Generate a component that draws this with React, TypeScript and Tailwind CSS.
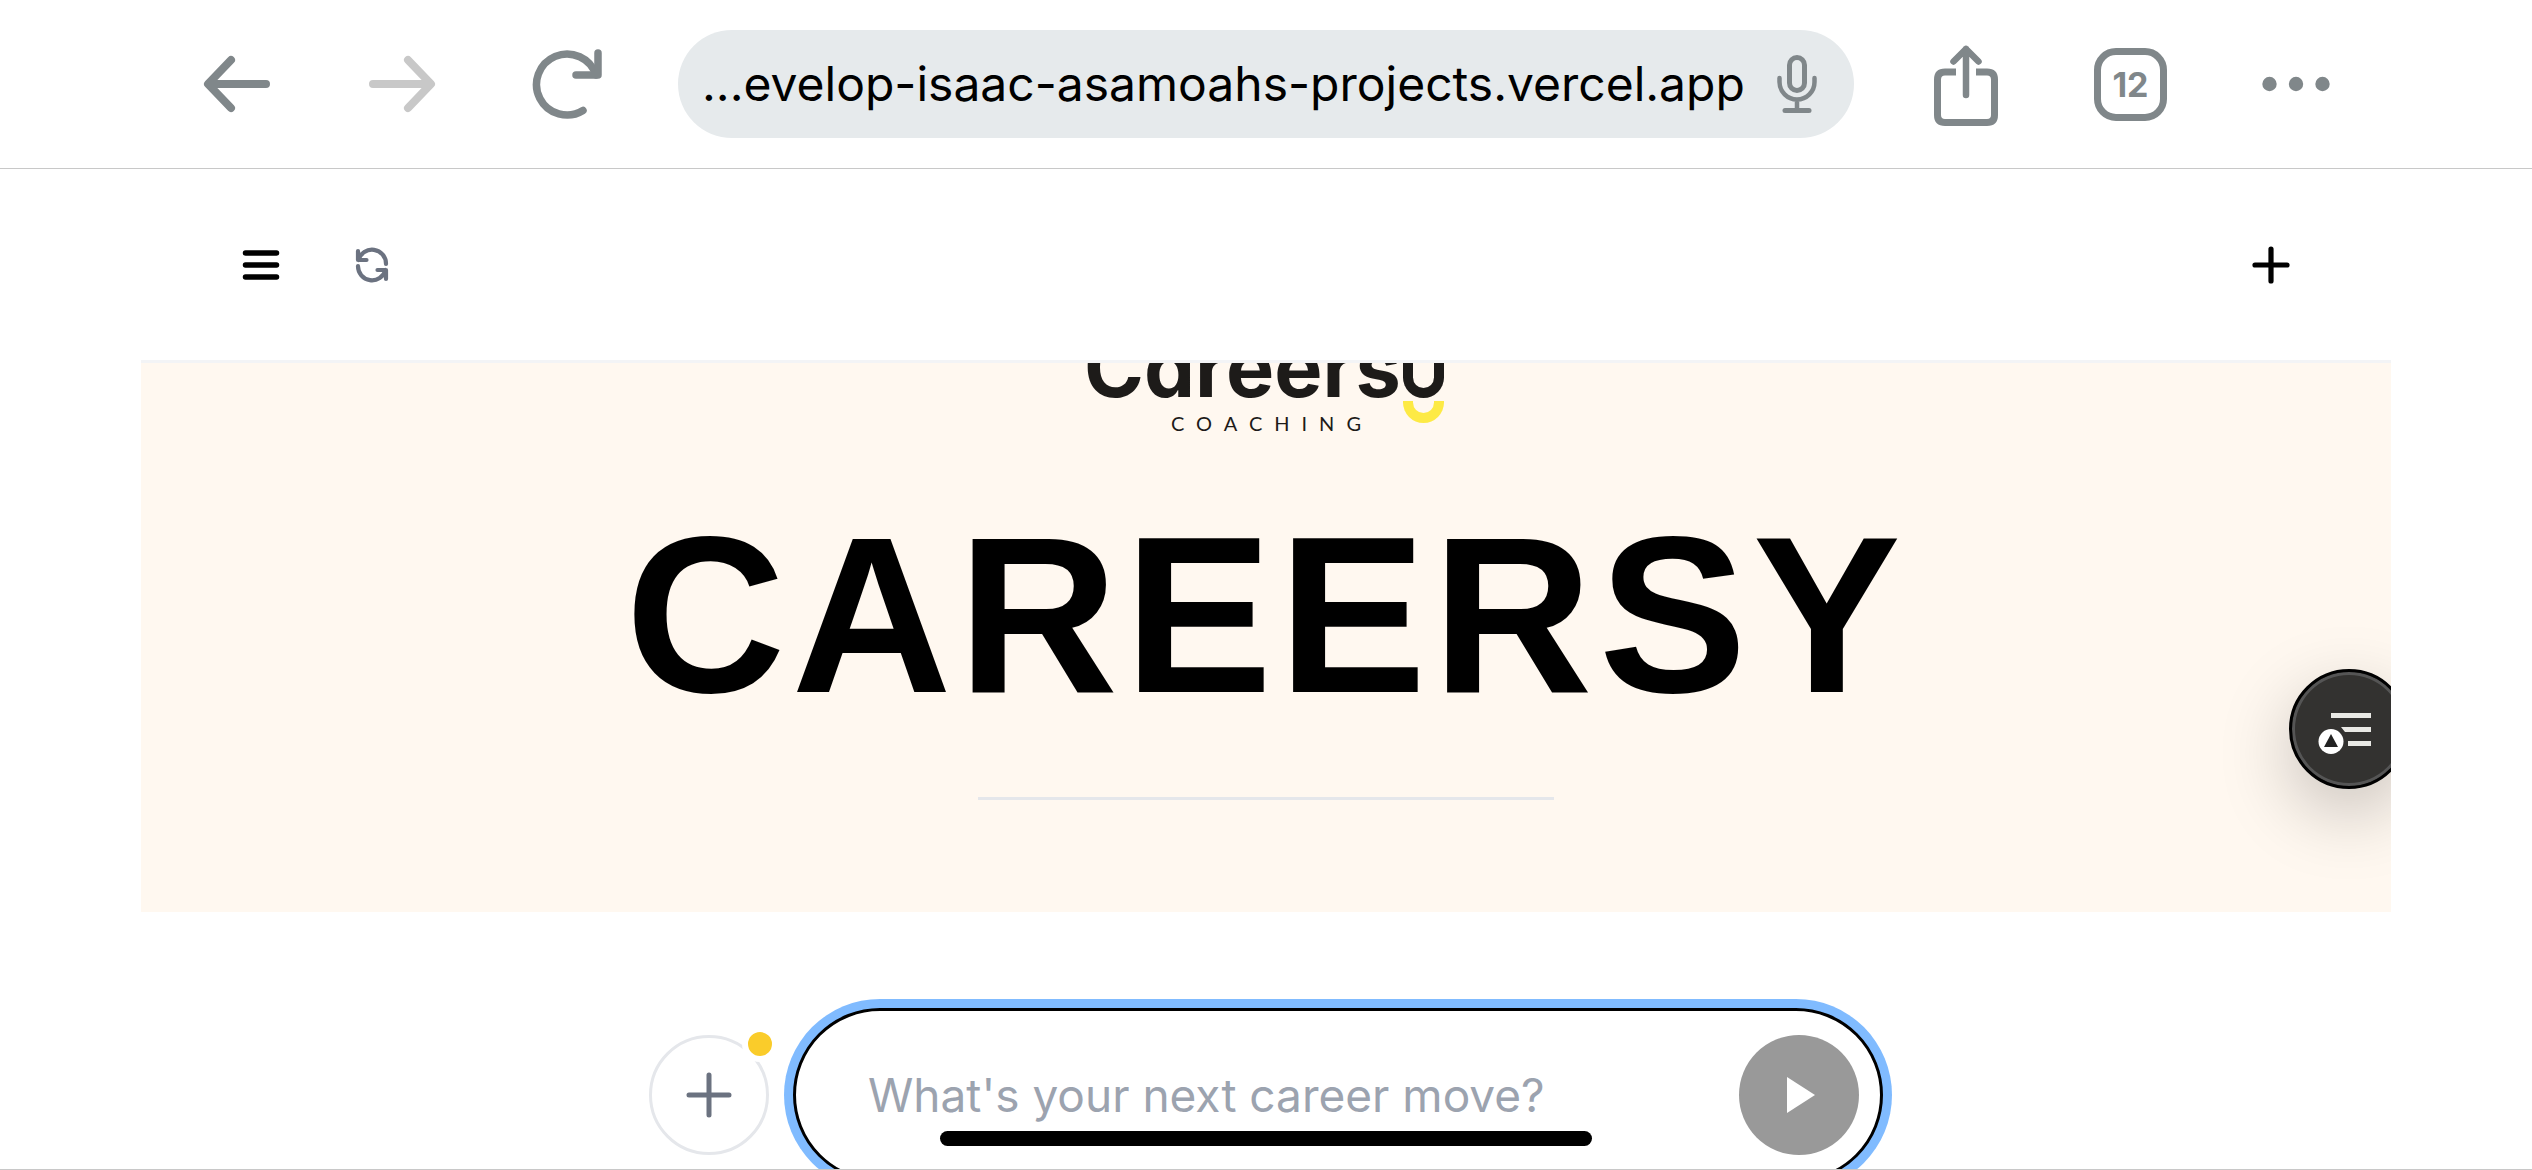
import React from "react";

const GRAY = "#80878a";

function BackIcon({ className = "" }: { className?: string }) {
  return (
    <svg width="70" height="60" viewBox="0 0 70 60" fill="none" stroke="currentColor" strokeWidth="8" strokeLinecap="round" strokeLinejoin="round" className={className}>
      <path d="M64 30H7M29 6 6 30l23 24" />
    </svg>
  );
}

function ReloadIcon() {
  return (
    <svg width="72" height="72" viewBox="0 0 72 72" fill="none" stroke="currentColor" strokeWidth="7.5" strokeLinecap="round" strokeLinejoin="round">
      <path d="M52 62.500A30.500 30.500 0 1 1 65 27" />
      <path d="M67 5V27H45" />
    </svg>
  );
}

function ShareIcon() {
  return (
    <svg width="66" height="84" viewBox="0 0 66 84" fill="none" stroke="currentColor" strokeWidth="7">
      <path d="M23 30H12Q4.500 30 4.500 37.500V73Q4.500 80.500 12 80.500H54Q61.500 80.500 61.500 73V37.500Q61.500 30 54 30H43" />
      <path d="M33 53V7M20.500 19.500 33 7l12.500 12.500" strokeWidth="6.500" strokeLinecap="round" strokeLinejoin="round" />
    </svg>
  );
}

function MicIcon() {
  return (
    <svg width="42" height="60" viewBox="0 0 42 60" fill="none" stroke={GRAY} strokeWidth="5" strokeLinecap="round">
      <rect x="13.500" y="3.500" width="15" height="33" rx="7.500" />
      <path d="M3.500 24v4a17.500 17.500 0 0 0 35 0v-4M21 46v9" strokeWidth="4.500" />
      <path d="M9 56.500h24" />
    </svg>
  );
}

function RefreshIcon() {
  return (
    <svg width="36" height="36" viewBox="0 0 36 36" fill="none" stroke="#6b7280" strokeWidth="4.200" strokeLinecap="round" strokeLinejoin="round">
      <path d="M4 4V13H12.500M4.500 13A14 14 0 0 1 32 17" />
      <path d="M32 32V23H23.500M31.500 23A14 14 0 0 1 4 19" />
    </svg>
  );
}

function OutlineIcon() {
  return (
    <svg width="54" height="44" viewBox="0 0 54 44" className="mt-2 mr-2">
      <path d="M13 2H53V7H13ZM23 16H53V21H27ZM30 30H53V35H30Z" fill="#e9e9e5" />
      <circle cx="13" cy="30.500" r="12.500" fill="#fff" />
      <path d="M13 23 20 36H6Z" fill="#222" />
    </svg>
  );
}

function BrowserButton({ label, children, disabled }: { label: string; children: React.ReactNode; disabled?: boolean }) {
  return (
    <button aria-label={label} disabled={disabled} className="flex h-[108px] w-[165px] items-center justify-center text-[#80878a] disabled:text-[#c8c8c8]">
      {children}
    </button>
  );
}

function BrowserBar() {
  return (
    <nav className="flex h-[169px] shrink-0 items-center gap-[29px] border-b border-[#c8c8c8] px-[154px]">
      <div className="flex">
        <BrowserButton label="Back"><BackIcon /></BrowserButton>
        <BrowserButton label="Forward" disabled><BackIcon className="rotate-180" /></BrowserButton>
        <BrowserButton label="Reload"><ReloadIcon /></BrowserButton>
      </div>
      <div className="flex h-[108px] min-w-0 flex-1 items-center justify-between rounded-full bg-[#e6eaec] pr-9 pl-6">
        <button className="text-[48px] leading-[60px] whitespace-nowrap text-black">...evelop-isaac-asamoahs-projects.vercel.app</button>
        <button aria-label="Voice search"><MicIcon /></button>
      </div>
      <div className="flex">
        <BrowserButton label="Share"><ShareIcon /></BrowserButton>
        <BrowserButton label="Tabs">
          <span className="flex size-[73px] items-center justify-center rounded-[22px] border-7 border-[#80878a] text-[34px] font-bold">12</span>
        </BrowserButton>
        <BrowserButton label="More">
          <svg width="68" height="16" viewBox="0 0 68 16" fill={GRAY}>
            <circle cx="7.500" cy="8" r="7.200" /><circle cx="34" cy="8" r="7.200" /><circle cx="60.500" cy="8" r="7.200" />
          </svg>
        </BrowserButton>
      </div>
    </nav>
  );
}

function AppHeader() {
  return (
    <header className="flex h-[194px] shrink-0 items-center justify-between border-b-3 border-[#f3f4f6] px-15">
      <div className="flex">
        <button aria-label="Menu" className="flex h-30 w-30 items-center justify-center">
          <svg width="38" height="32" viewBox="0 0 38 32" stroke="#000" strokeWidth="5.500" strokeLinecap="round">
            <path d="M3.500 4h31M3.500 16h31M3.500 28h31" />
          </svg>
        </button>
        <button aria-label="Refresh" className="flex h-30 w-[102px] items-center justify-center"><RefreshIcon /></button>
      </div>
      <button aria-label="New chat" className="flex h-30 w-30 items-center justify-center">
        <svg width="38" height="38" viewBox="0 0 38 38" stroke="#000" strokeWidth="5.200" strokeLinecap="round">
          <path d="M19 3v32M3 19h32" />
        </svg>
      </button>
    </header>
  );
}

function Logo() {
  return (
    <div role="img" aria-label="Careersy Coaching" className="relative flex h-[72px] w-[356px] flex-col items-center justify-end text-[#1d1b19]">
      <div className="absolute bottom-[27px] left-0 -ml-1 text-[81px] leading-[80px] font-bold [font-feature-settings:'cv11']">Careers</div>
      <div className="absolute right-0 bottom-[37px] h-15 w-[41px] rounded-b-full border-10 border-t-0 border-[#1d1b19]" />
      <div className="absolute right-0 bottom-3 h-[22px] w-[41px] rounded-b-full border-10 border-t-0 border-[#fdea45]" />
      <div className="pl-3 font-[Lato] text-[20px] leading-6 tracking-[12px]">COACHING</div>
    </div>
  );
}

function Hero() {
  return (
    <main className="relative flex h-[549px] shrink-0 flex-col items-center overflow-hidden bg-[#fff8f0]">
      <Logo />
      <h1 className="mt-14 font-['Liberation_Sans'] text-[222px] leading-[248px] font-bold tracking-[6px] text-black">CAREERSY</h1>
      <hr className="mt-[58px] w-[576px] border-t-3 border-[#e5e7eb]" />
      <button aria-label="Outline" className="absolute top-[306px] -right-[18px] flex size-30 items-center justify-center rounded-full border-3 border-black bg-[#333230] shadow-[inset_0_0_0_3px_#555,0_24px_72px_rgba(0,0,0,0.22)]">
        <OutlineIcon />
      </button>
    </main>
  );
}

function Composer() {
  return (
    <form className="flex items-center justify-center gap-6 pt-24" onSubmit={(e) => e.preventDefault()}>
      <button type="button" aria-label="Add attachment" className="relative flex size-30 items-center justify-center rounded-full border-3 border-[#e5e7eb]">
        <svg width="50" height="50" viewBox="0 0 50 50" stroke="#6b7280" strokeWidth="5" strokeLinecap="round">
          <path d="M25 5v40M5 25h40" />
        </svg>
        <span className="absolute -top-3 -right-3 size-9 rounded-full border-6 border-white bg-[#facc2a]" />
      </button>
      <div className="flex h-[174px] w-[1090px] items-center rounded-full border-3 border-black bg-white pr-[21px] pl-[72px] shadow-[0_0_0_9px_#80bbff]">
        <input aria-label="Message" placeholder="What's your next career move?" className="h-18 min-w-0 flex-1 text-[46px] outline-none placeholder:text-[#9ca3af]" />
        <button aria-label="Send" className="flex size-30 items-center justify-center rounded-full bg-[#999]">
          <svg width="28" height="36" viewBox="0 0 28 36" fill="#fff" className="ml-1"><path d="M0 0 28 18 0 36Z" /></svg>
        </button>
      </div>
    </form>
  );
}

export default function App() {
  return (
    <div className="relative flex h-screen flex-col overflow-hidden bg-white font-[Inter,sans-serif]">
      <BrowserBar />
      <div className="mx-[141px] flex flex-1 flex-col">
        <AppHeader />
        <Hero />
        <Composer />
      </div>
      <div className="absolute inset-x-0 bottom-0 h-px bg-[#c8c8c8]" />
      <div className="absolute bottom-6 left-1/2 h-[15px] w-[652px] -translate-x-1/2 rounded-full bg-black" />
    </div>
  );
}
